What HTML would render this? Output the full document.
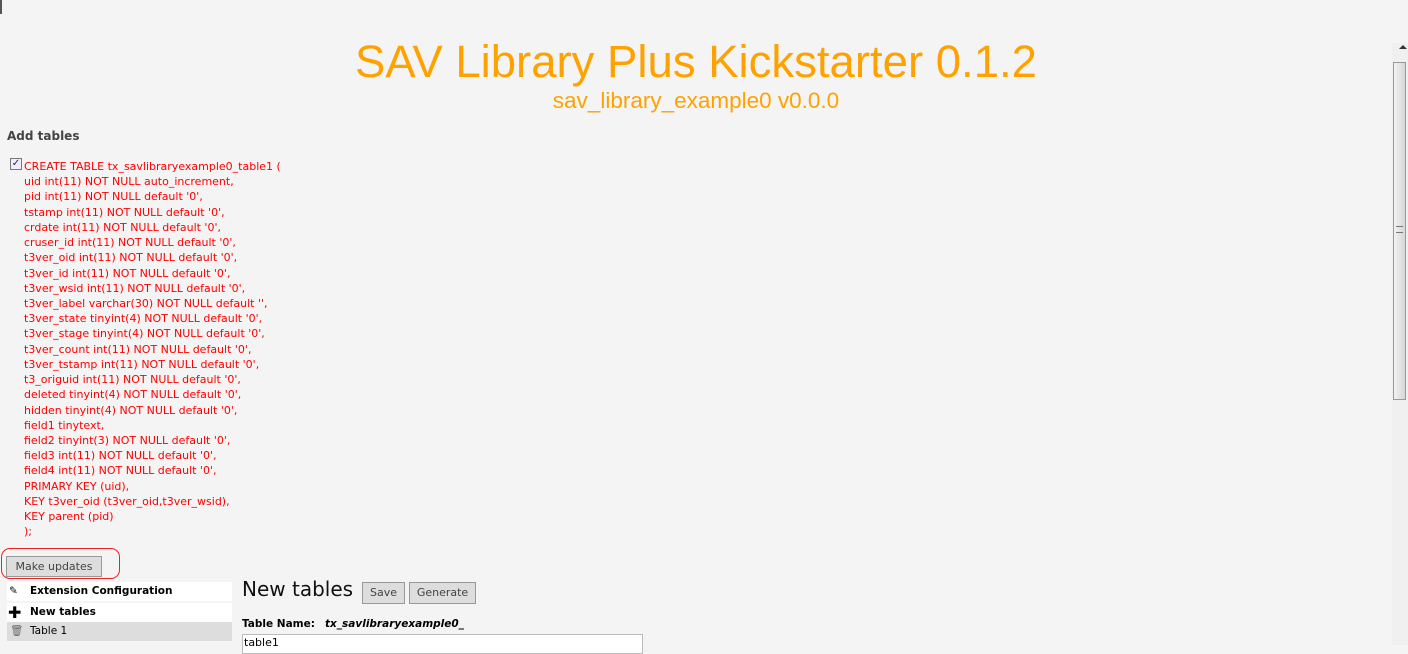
<!DOCTYPE html>
<html><head><meta charset="utf-8"><style>
body{margin:0;width:1408px;height:645px;background:#f4f4f4;font-family:"DejaVu Sans","Liberation Sans",sans-serif;overflow:hidden;position:relative}
.t1{position:absolute;left:0;width:1392px;top:37px;text-align:center;color:#ffa200;font-size:45.5px;font-family:"Liberation Sans",sans-serif;line-height:50px}
.t2{position:absolute;left:0;width:1392px;top:88px;text-align:center;color:#ffa200;font-size:22.5px;font-family:"Liberation Sans",sans-serif}
h3{position:absolute;left:7px;top:129px;margin:0;font-size:12px;color:#444;font-weight:bold}
.sql{position:absolute;left:24px;top:159px;color:#f00;font-size:11px;line-height:15.22px;white-space:pre}
.cb{position:absolute;left:10px;top:158px;width:10px;height:10px;border:1px solid #777;background:#eef;font-size:10px;line-height:10px;color:#225;text-align:center}
.btn{position:absolute;background:#ddd;border:1px solid #999;font-size:11px;color:#444;text-align:center;box-sizing:border-box}
.ring{position:absolute;left:1px;top:548px;width:119px;height:31px;border:1.5px solid #e22;border-radius:9px;box-sizing:border-box}
.row{position:absolute;left:7px;width:225px;height:19px;font-size:10.5px;font-weight:bold;line-height:19px}
.sb{position:absolute;left:1392px;top:43px;width:16px;height:602px;background:#f0f0f0}
.th{position:absolute;left:1393px;top:62px;width:13px;height:338px;background:linear-gradient(90deg,#f2f2f2,#d6d6d6);border:1px solid #999;box-sizing:border-box}
</style></head><body>
<div style="position:absolute;left:0;top:0;width:2px;height:14px;background:#555"></div>
<div class="t1">SAV Library Plus Kickstarter 0.1.2</div>
<div class="t2">sav_library_example0 v0.0.0</div>
<h3>Add tables</h3>
<div class="cb">✓</div>
<div class="sql">CREATE TABLE tx_savlibraryexample0_table1 (
uid int(11) NOT NULL auto_increment,
pid int(11) NOT NULL default '0',
tstamp int(11) NOT NULL default '0',
crdate int(11) NOT NULL default '0',
cruser_id int(11) NOT NULL default '0',
t3ver_oid int(11) NOT NULL default '0',
t3ver_id int(11) NOT NULL default '0',
t3ver_wsid int(11) NOT NULL default '0',
t3ver_label varchar(30) NOT NULL default '',
t3ver_state tinyint(4) NOT NULL default '0',
t3ver_stage tinyint(4) NOT NULL default '0',
t3ver_count int(11) NOT NULL default '0',
t3ver_tstamp int(11) NOT NULL default '0',
t3_origuid int(11) NOT NULL default '0',
deleted tinyint(4) NOT NULL default '0',
hidden tinyint(4) NOT NULL default '0',
field1 tinytext,
field2 tinyint(3) NOT NULL default '0',
field3 int(11) NOT NULL default '0',
field4 int(11) NOT NULL default '0',
PRIMARY KEY (uid),
KEY t3ver_oid (t3ver_oid,t3ver_wsid),
KEY parent (pid)
);</div>
<div class="ring"></div>
<div class="btn" style="left:6px;top:556px;width:96px;height:21px;line-height:19px">Make updates</div>
<div class="row" style="top:582px;background:#fff"><span style="position:absolute;left:2px;font-weight:normal">✎</span><span style="position:absolute;left:23px">Extension Configuration</span></div>
<div class="row" style="top:603px;background:#fff"><span style="position:absolute;left:1px;font-size:16px">✚</span><span style="position:absolute;left:23px">New tables</span></div>
<div class="row" style="top:622px;background:#ddd;font-weight:normal"><span style="position:absolute;left:3px;color:#666">🗑</span><span style="position:absolute;left:23px">Table 1</span></div>
<div style="position:absolute;left:242px;top:577px;font-size:20px;color:#111">New tables</div>
<div class="btn" style="left:362px;top:582px;width:43px;height:22px;line-height:20px">Save</div>
<div class="btn" style="left:409px;top:582px;width:67px;height:22px;line-height:20px">Generate</div>
<div style="position:absolute;left:242px;top:618px;font-size:10.5px;font-weight:bold">Table Name:</div>
<div style="position:absolute;left:325px;top:618px;font-size:10.5px;font-weight:bold;font-style:italic">tx_savlibraryexample0_</div>
<div style="position:absolute;left:242px;top:634px;width:401px;height:20px;box-sizing:border-box;border:1px solid #bbb;background:#fff;font-size:11px;line-height:16px;padding-left:1px">table1</div>
<div class="sb"></div>
<div style="position:absolute;left:1399px;top:45px;border:4px solid transparent;border-bottom:4px solid #333;border-top:0;"></div>
<div class="th"></div>
<div style="position:absolute;left:1396px;top:226px;width:7px;height:5px;border-top:1px solid #777;border-bottom:1px solid #777"></div>
</body></html>
